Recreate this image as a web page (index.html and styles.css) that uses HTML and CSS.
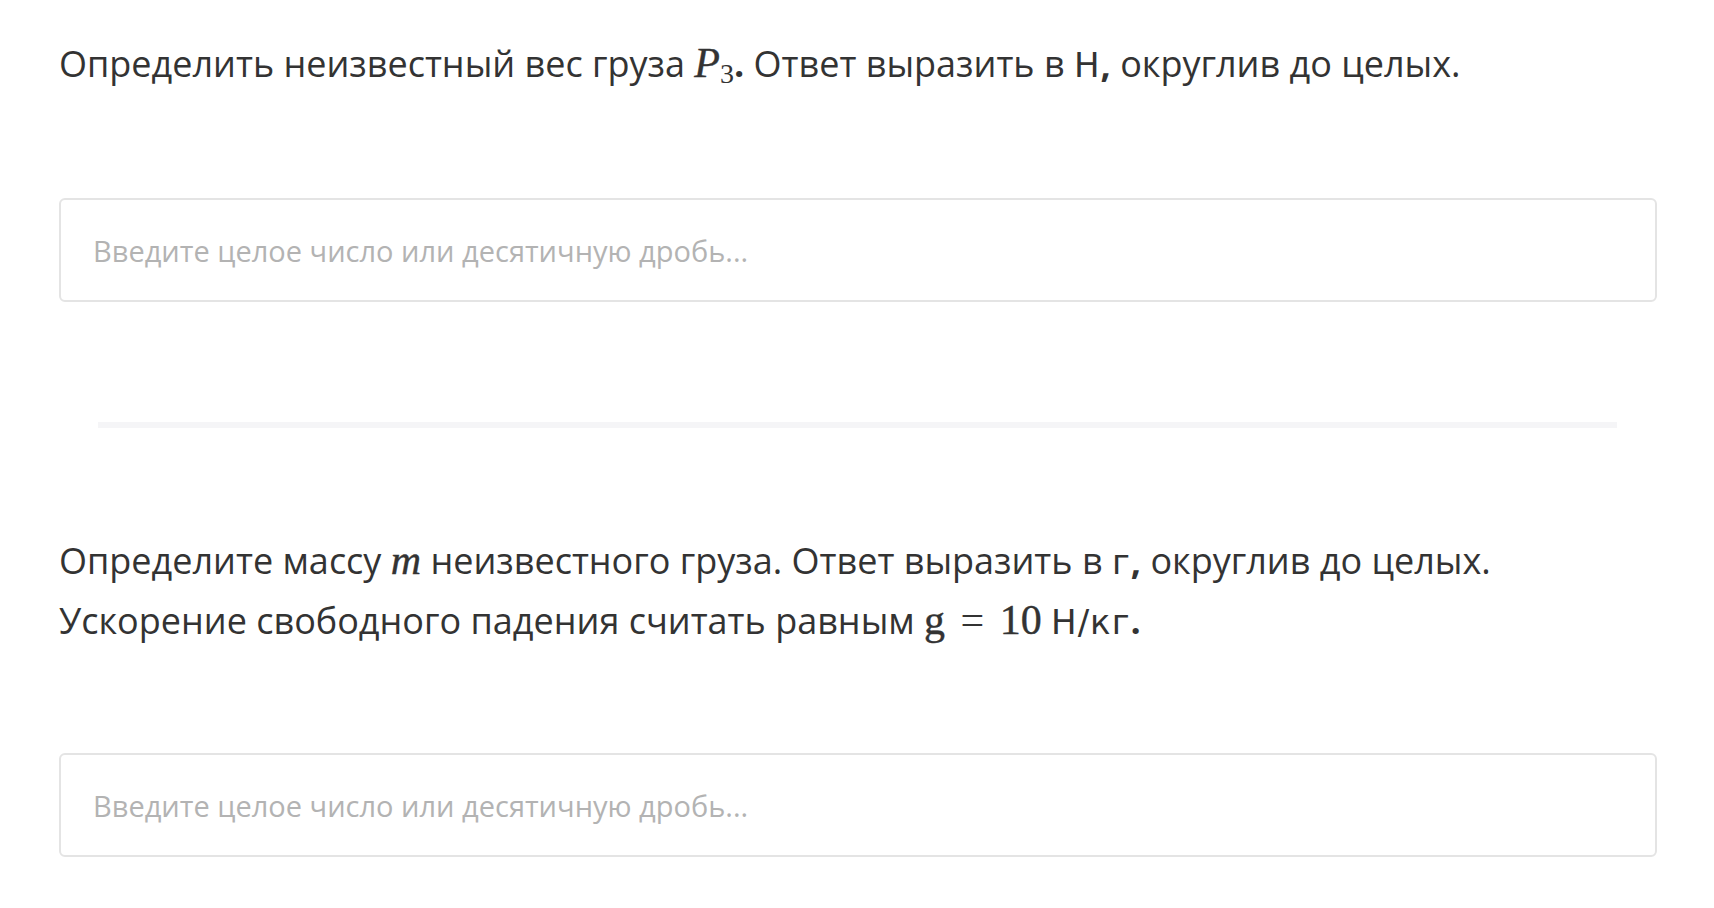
FILE: index.html
```html
<!DOCTYPE html>
<html lang="ru">
<head>
<meta charset="utf-8">
<link rel="stylesheet" href="styles.css">
</head>
<body>
<main class="page">
  <section class="task">
    <p class="question">Определить неизвестный вес груза <span class="math"><i class="mi">P</i><sub class="msub">3</sub></span><span class="punct">.</span> Ответ выразить в <span class="unit">Н</span><span class="punct">,</span> округлив до целых.</p>
    <div class="answer"><input class="answer-input" type="text" placeholder="Введите целое число или десятичную дробь..."></div>
  </section>
  <hr class="divider">
  <section class="task task-second">
    <p class="question">Определите массу <i class="mi">m</i> неизвестного груза. Ответ выразить в <span class="unit">г</span><span class="punct">,</span> округлив до целых.<br>Ускорение свободного падения считать равным <span class="math"><span class="mn">g</span> <span class="mo">=</span> <span class="mn">10</span></span> <span class="unit">Н/кг</span><span class="punct">.</span></p>
    <div class="answer"><input class="answer-input" type="text" placeholder="Введите целое число или десятичную дробь..."></div>
  </section>
</main>
</body>
</html>
```
FILE: styles.css
```css
html, body {
  margin: 0;
  padding: 0;
  background: #ffffff;
}
body {
  font-family: "Open Sans", "Noto Sans", sans-serif;
  color: #333333;
}
.page {
  padding: 34px 57px 0 59px;
}
.task {
  display: flex;
  flex-direction: column;
}
.question {
  margin: 0;
  font-size: 36px;
  line-height: 58px;
  letter-spacing: 0;
}
.math {
  font-family: "Liberation Serif", "Times New Roman", serif;
  font-size: 42px;
}
.mi {
  font-family: "Liberation Serif", "Times New Roman", serif;
  font-style: italic;
  font-size: 42px;
  -webkit-text-stroke: 0.4px #333333;
}
.msub {
  font-size: 28px;
  font-style: normal;
  vertical-align: -6px;
  line-height: 0;
}
.mn {
  font-family: "Liberation Serif", "Times New Roman", serif;
  -webkit-text-stroke: 0.4px #333333;
}
.mo {
  font-family: "Liberation Serif", "Times New Roman", serif;
  margin: 0 5px;
}
.unit {
  font-family: "DejaVu Sans", sans-serif;
  font-size: 34px;
  letter-spacing: 1px;
}
.punct {
  font-weight: 700;
}
.answer {
  margin-top: 104px;
}
.answer-input {
  box-sizing: border-box;
  display: block;
  width: 100%;
  height: 104px;
  border: 2px solid #e4e4e4;
  border-radius: 6px;
  padding: 0 32px;
  font-family: "Open Sans", "Noto Sans", sans-serif;
  font-size: 29px;
  color: #333333;
  background: #ffffff;
  outline: none;
}
.answer-input::placeholder {
  color: #b3b3b3;
}
.divider {
  border: 0;
  height: 6px;
  background: #f5f5f7;
  margin: 120px 40px 0 39px;
}
.task-second {
  margin-top: 103px;
}
.task-second .answer {
  margin-top: 102px;
}
```
